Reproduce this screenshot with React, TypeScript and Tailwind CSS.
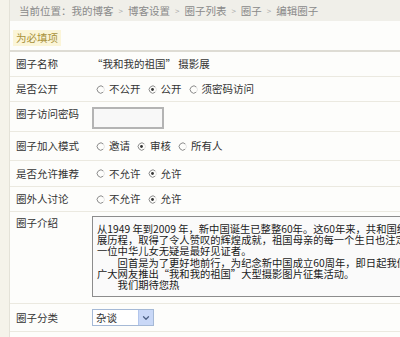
import { ChevronDown } from 'lucide-react';

const font = { fontFamily: '"Noto Sans CJK SC", "Liberation Sans", sans-serif' };

function Radio({ checked, label }: { checked?: boolean; label: string }) {
  return (
    <span className="flex items-center gap-[4px] mr-[7px]">
      <svg width="9" height="9" viewBox="0 0 9 9" className="shrink-0">
        <path d="M7.5 2.2 A3.6 3.6 0 1 0 7.2 7.2" fill="none" stroke="#8a8a8a" strokeWidth="1" />
        <path d="M7.2 7.2 A3.6 3.6 0 0 0 7.5 2.2" fill="none" stroke="#e2e2e2" strokeWidth="1" />
        {checked && <circle cx="4.5" cy="4.5" r="1.4" fill="#333" />}
      </svg>
      <span>{label}</span>
    </span>
  );
}

function Row({ label, h, top, children }: { label: string; h: string; top?: boolean; children?: React.ReactNode }) {
  return (
    <div className={`flex border-b border-[#ebe9e0] ${h} ${top ? 'items-start' : 'items-center'}`}>
      <div className={`w-[82px] pl-[6px] shrink-0 text-[#333] ${top ? 'pt-[5px]' : ''}`}>{label}</div>
      <div className="flex items-center">{children}</div>
    </div>
  );
}

const Sep = () => <span className="mx-[5px] text-[8px] text-[#aaa]">&gt;</span>;

export default function App() {
  return (
    <div className="flex w-[400px] h-[337px] overflow-hidden bg-[#f5f3ea] text-[10.5px] leading-[14px]" style={font}>
      <div className="w-[10px] shrink-0 border-r border-[#e4e2d8]" />
      <div className="flex-1 bg-[#fdfdfb] overflow-hidden">
        {/* breadcrumb */}
        <div className="h-[21px] bg-[#f0efe9] flex items-center pl-[9px] text-[#8a8a8a] whitespace-nowrap">
          当前位置：我的博客<Sep />博客设置<Sep />圈子列表<Sep />圈子<Sep />编辑圈子
        </div>

        <div className="h-[31px] flex items-end pb-[4px] border-b-2 border-[#dedcd4]">
          <span className="ml-[3px] px-[3px] py-[1px] bg-[#fbf5d8] text-[#a8913a]">为必填项</span>
        </div>

        <Row label="圈子名称" h="h-[25px]">
          <span className="text-[#333]">“我和我的祖国” 摄影展</span>
        </Row>

        <Row label="是否公开" h="h-[25px]">
          <div className="flex items-center pl-[4px] text-[#333]">
            <Radio label="不公开" />
            <Radio checked label="公开" />
            <Radio label="须密码访问" />
          </div>
        </Row>

        <Row label="圈子访问密码" h="h-[30px]" top>
          <div className="mt-[5px] w-[72px] h-[22px] border-2 border-[#b4b4b4] bg-[#f8f8f8]" />
        </Row>

        <Row label="圈子加入模式" h="h-[29px]">
          <div className="flex items-center pl-[4px] text-[#333]">
            <Radio label="邀请" />
            <Radio checked label="审核" />
            <Radio label="所有人" />
          </div>
        </Row>

        <Row label="是否允许推荐" h="h-[26px]">
          <div className="flex items-center pl-[4px] text-[#333]">
            <Radio label="不允许" />
            <Radio checked label="允许" />
          </div>
        </Row>

        <Row label="圈外人讨论" h="h-[25px]">
          <div className="flex items-center pl-[4px] text-[#333]">
            <Radio label="不允许" />
            <Radio checked label="允许" />
          </div>
        </Row>

        <div className="flex items-start border-b border-[#ebe9e0] h-[92px]">
          <div className="w-[82px] pl-[6px] pt-[4px] shrink-0 text-[#333]">圈子介绍</div>
          <div className="mt-[4px] w-[400px] h-[81px] shrink-0 border border-[#8c8c8c] bg-[#fafafa] pl-[4px] pt-[6px] text-[10.3px] leading-[11.2px] text-[#1a1a1a] whitespace-nowrap">
            <div>从1949 年到2009 年，新中国诞生已整整60年。这60年来，共和国经历</div>
            <div>展历程，取得了令人赞叹的辉煌成就，祖国母亲的每一个生日也注定不平</div>
            <div>一位中华儿女无疑是最好见证者。</div>
            <div>&emsp;&emsp;回首是为了更好地前行，为纪念新中国成立60周年，即日起我们将</div>
            <div>广大网友推出“我和我的祖国”大型摄影图片征集活动。</div>
            <div>&emsp;&emsp;我们期待您热</div>
          </div>
        </div>

        <Row label="圈子分类" h="h-[28px]">
          <div className="flex items-center w-[62px] h-[17px] border border-[#a5b9d6] bg-white">
            <span className="flex-1 pl-[3px] text-[#333]">杂谈</span>
            <span className="w-[15px] h-[15px] flex items-center justify-center bg-[#c9d8f7] border-l border-[#b3c6ec]">
              <ChevronDown size={10} strokeWidth={3} color="#4d6185" />
            </span>
          </div>
        </Row>
      </div>
    </div>
  );
}
